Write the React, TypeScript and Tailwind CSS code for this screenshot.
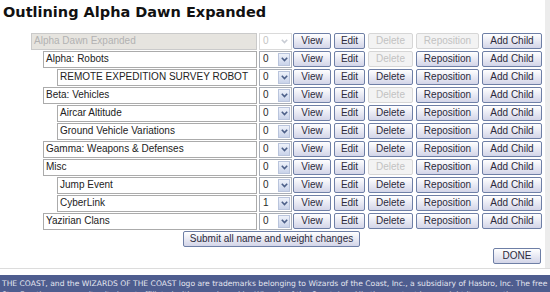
import React from "react";

type Row = {
  name: string;
  level: 0 | 1 | 2;
  value: string;
  rootRow?: boolean;
  delDisabled?: boolean;
  repDisabled?: boolean;
};

const rows: Row[] = [
  { name: "Alpha Dawn Expanded", level: 0, value: "0", rootRow: true, delDisabled: true, repDisabled: true },
  { name: "Alpha: Robots", level: 1, value: "0", delDisabled: true },
  { name: "REMOTE EXPEDITION SURVEY ROBOT", level: 2, value: "0" },
  { name: "Beta: Vehicles", level: 1, value: "0", delDisabled: true },
  { name: "Aircar Altitude", level: 2, value: "0" },
  { name: "Ground Vehicle Variations", level: 2, value: "0" },
  { name: "Gamma: Weapons & Defenses", level: 1, value: "0" },
  { name: "Misc", level: 1, value: "0", delDisabled: true },
  { name: "Jump Event", level: 2, value: "0" },
  { name: "CyberLink", level: 2, value: "1" },
  { name: "Yazirian Clans", level: 1, value: "0" },
];

function Btn({ label, w, disabled }: { label: string; w: string; disabled?: boolean }) {
  return (
    <div
      className={`${w} h-[16px] shrink-0 flex items-center justify-center rounded-[2px] border text-[10px] leading-none whitespace-nowrap ${
        disabled
          ? "border-[#d6d6d6] bg-[#f3f3f3] text-[#c2c2c2]"
          : "border-[#6e7fa6] bg-gradient-to-b from-[#ffffff] to-[#d3d5e8] text-[#2c2a3c]"
      }`}
    >
      {label}
    </div>
  );
}

function Chevron({ color }: { color: string }) {
  return (
    <svg width="7" height="5" viewBox="0 0 7 5">
      <path d="M0.8 0.8 L3.5 3.6 L6.2 0.8" fill="none" stroke={color} strokeWidth="1.6" />
    </svg>
  );
}

function Select({ value, disabled }: { value: string; disabled?: boolean }) {
  return (
    <div
      className={`w-[33px] h-[17px] shrink-0 flex items-center justify-between border bg-white pl-[3px] pr-[1px] text-[10px] leading-none ${
        disabled ? "border-[#dadada] text-[#c4c4c4]" : "border-[#a9aeb6] text-[#2a2a2a]"
      }`}
    >
      <span>{value}</span>
      {disabled ? (
        <div className="w-[12px] h-[13px] flex items-center justify-center">
          <Chevron color="#c8ccd4" />
        </div>
      ) : (
        <div className="w-[12px] h-[13px] flex items-center justify-center border border-[#b9c4dc] bg-gradient-to-b from-[#eef2fa] to-[#c9d3ea]">
          <Chevron color="#4c5f88" />
        </div>
      )}
    </div>
  );
}

export default function App() {
  const indent = { 0: "pl-[31px]", 1: "pl-[43px]", 2: "pl-[57px]" } as const;
  return (
    <div className="w-[550px] h-[292px] overflow-hidden bg-white" style={{ fontFamily: '"Liberation Sans", Arial, sans-serif' }}>
      <div className="flex">
        <div className="w-[545px] h-[268px] bg-white">
          <h1
            className="pl-[3px] pt-[3px] h-[32px] text-[14.5px] font-bold leading-[18px] text-[#111]"
            style={{ fontFamily: '"DejaVu Sans", Verdana, sans-serif' }}
          >
            Outlining Alpha Dawn Expanded
          </h1>
          <div className="flex flex-col">
            {rows.map((r, i) => (
              <div key={i} className="h-[18px] flex items-center">
                <div className={`${indent[r.level]} w-[257px] shrink-0 flex`}>
                  <div
                    className={`flex-1 h-[17px] flex items-center border pl-[2px] text-[10px] leading-none whitespace-nowrap overflow-hidden ${
                      r.rootRow
                        ? "bg-[#e6e4df] border-[#cacaca] text-[#b2b2b2]"
                        : "bg-white border-[#ababab] text-[#222]"
                    }`}
                  >
                    {r.name}
                  </div>
                </div>
                <div className="ml-[2px]">
                  <Select value={r.value} disabled={r.rootRow} />
                </div>
                <div className="ml-[1px] flex gap-[3px]">
                  <Btn label="View" w="w-[38px]" />
                  <Btn label="Edit" w="w-[31px]" />
                  <Btn label="Delete" w="w-[45px]" disabled={r.delDisabled} />
                  <Btn label="Reposition" w="w-[63px]" disabled={r.repDisabled} />
                  <Btn label="Add Child" w="w-[60px]" />
                </div>
              </div>
            ))}
          </div>
          <div className="pl-[183px] pt-[1px]">
            <div className="w-[177px] h-[16px] flex items-center justify-center rounded-[2px] border border-[#6e7fa6] bg-gradient-to-b from-[#ffffff] to-[#d3d5e8] text-[10px] leading-none whitespace-nowrap text-[#2c2a3c]">
              Submit all name and weight changes
            </div>
          </div>
          <div className="pl-[493px] pt-[1px]">
            <div className="w-[48px] h-[16px] flex items-center justify-center rounded-[2px] border border-[#6e7fa6] bg-gradient-to-b from-[#ffffff] to-[#d3d5e8] text-[10px] leading-none text-[#2c2a3c]">
              DONE
            </div>
          </div>
        </div>
        <div className="w-[5px] h-[268px] bg-[#ececec]" />
      </div>
      <div className="h-[1px] bg-[#dcdcdc]" />
      <div className="h-[6px] bg-white" />
      <div
        className="h-[17px] bg-[#4e5d8f] pt-[3px] pl-[2px] text-[7.6px] leading-[11px] text-[#e4e6f0] whitespace-nowrap overflow-hidden"
        style={{ fontFamily: '"DejaVu Sans", Verdana, sans-serif' }}
      >
        <div>
          THE COAST, and the WIZARDS OF THE COAST logo are trademarks belonging to Wizards of the Coast, Inc., a subsidiary of Hasbro, Inc. The free
        </div>
        <div>
          Star Frontiers community site is not affiliated with or endorsed by Wizards of the Coast, Inc. All other content is copyright its respective owners.
        </div>
      </div>
    </div>
  );
}
